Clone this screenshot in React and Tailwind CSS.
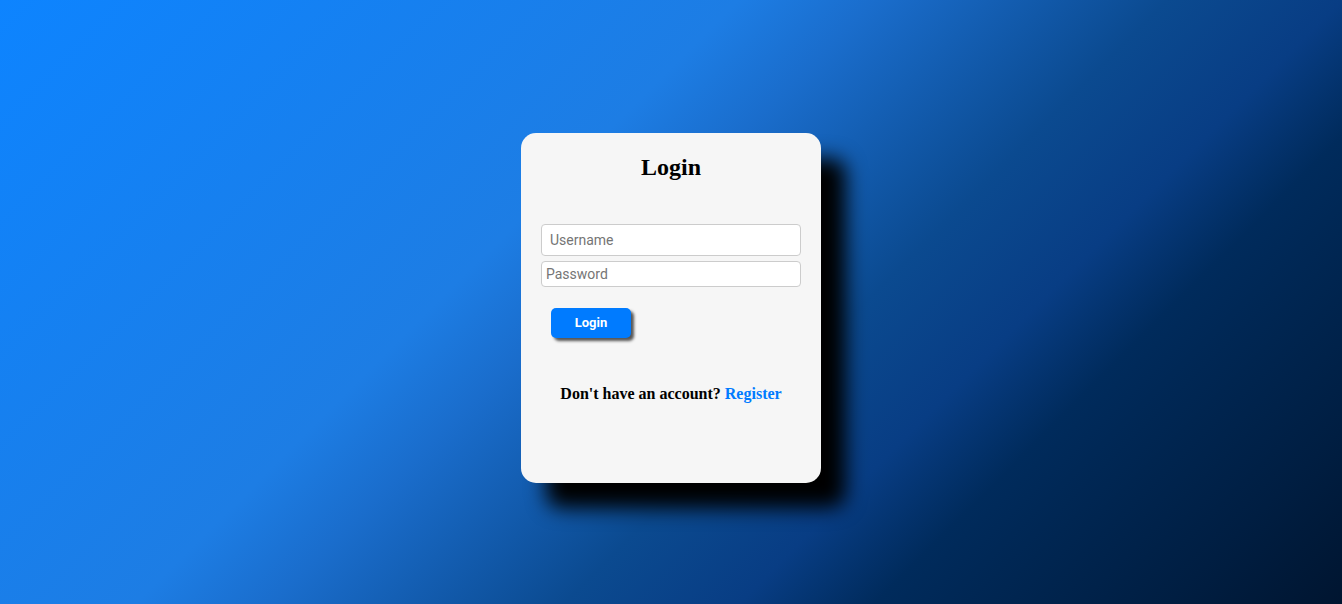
export default function App() {
  return (
    <div className="h-screen w-full flex items-center justify-center pt-3 bg-[linear-gradient(135deg,#0d84ff_0%,#1d7de4_38%,#1a6dcc_45%,#0b4a90_60%,#083d84_69%,#002b5c_76%,#001e42_91%,#001530_100%)]">
      <div className="w-[300px] h-[350px] bg-[#f6f6f6] rounded-[15px] p-5 shadow-[25px_25px_20px_#000] flex flex-col">
        <h2 className="text-center text-[24px] font-bold text-black font-['Liberation_Serif',serif] leading-[28px]">
          Login
        </h2>

        <input
          className="mt-[43px] h-[32px] w-full bg-white border border-[#ccc] rounded-[4px] px-2 text-[14px] font-['Roboto',sans-serif] placeholder:text-[#757575] outline-none"
          placeholder="Username"
        />

        <input
          className="mt-[5px] h-[26px] w-full bg-white border border-[#ccc] rounded-[4px] px-1 text-[14px] font-['Roboto',sans-serif] placeholder:text-[#757575] outline-none"
          type="password"
          placeholder="Password"
        />

        <button className="mt-[21px] ml-[10px] w-[80px] h-[30px] bg-[#007bff] text-white text-[13px] font-bold font-['Roboto',sans-serif] rounded-[5px] shadow-[3px_3px_3px_#555]">
          Login
        </button>

        <p className="mt-[44px] text-center text-[16px] font-bold text-black font-['Liberation_Serif',serif]">
          Don't have an account? <a href="#" className="text-[#007bff]">Register</a>
        </p>
      </div>
    </div>
  );
}
